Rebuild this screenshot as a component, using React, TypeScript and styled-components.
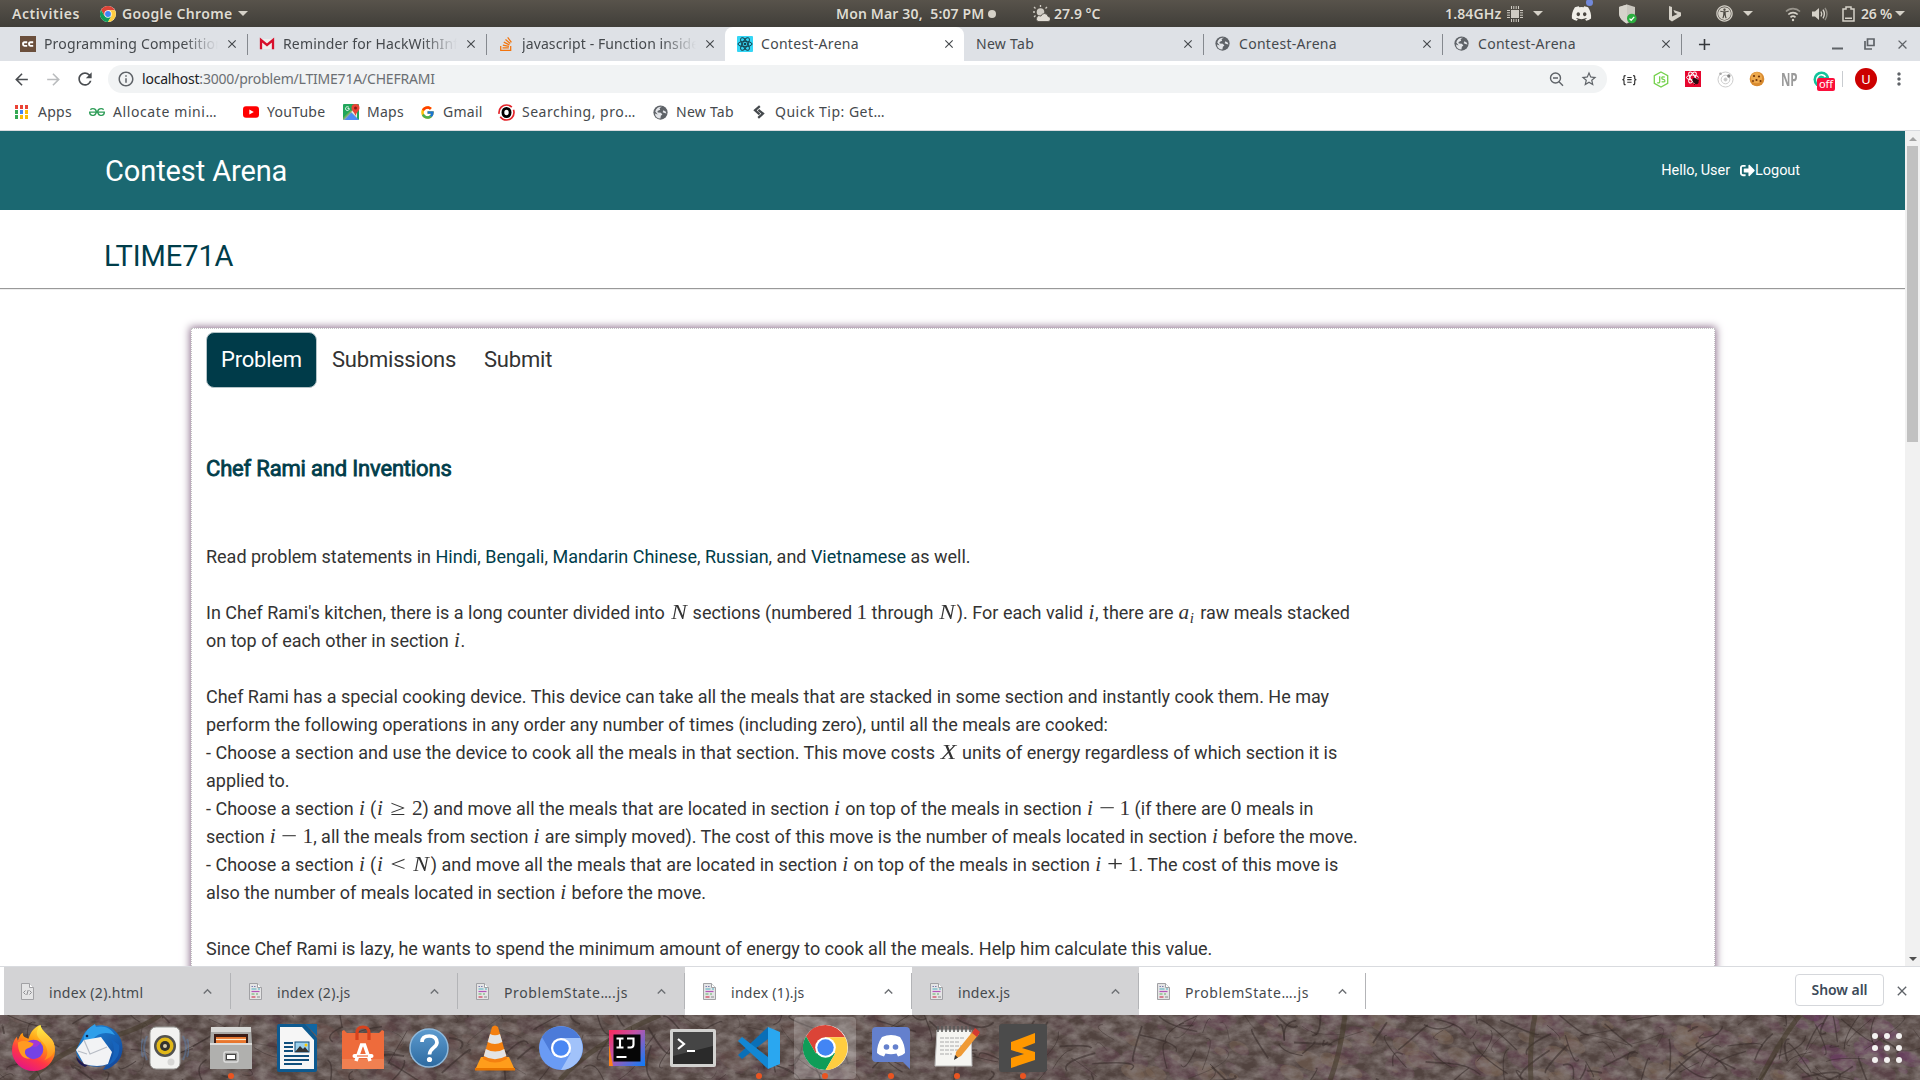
import React from "react";
import styled, { createGlobalStyle, css } from "styled-components";
import {
  MdArrowBack, MdArrowForward, MdRefresh, MdInfoOutline, MdStarBorder, MdMoreVert, MdClose,
  MdKeyboardArrowUp, MdAdd,
} from "react-icons/md";
import { FaDiscord, FaStackOverflow, FaSignOutAlt, FaUniversalAccess } from "react-icons/fa";
import { FcGoogle } from "react-icons/fc";
import { SiGeeksforgeeks } from "react-icons/si";

const Global = createGlobalStyle`
  * { box-sizing: border-box; }
  html, body { margin: 0; padding: 0; background: #fff; }
  body { width: 1920px; height: 1080px; overflow: hidden; }
  svg { display: block; flex: none; }
`;
const ui = css`font-family: "Noto Sans", "Open Sans", sans-serif; white-space: nowrap;`;
const web = css`font-family: Roboto, "Liberation Sans", sans-serif; white-space: nowrap;`;

const Screen = styled.div`
  width: 1920px; height: 1080px; overflow: hidden; display: flex; flex-direction: column; background: #fff;
`;
const Gap = styled.i<{ $w: number }>`width: ${p => p.$w}px; flex: none;`;
const Slot = styled.span<{ $w: number }>`
  width: ${p => p.$w}px; flex: none; display: flex; align-items: center; justify-content: center; height: 100%;
`;

/* ---------- GNOME top bar ---------- */
const TopBar = styled.div`
  ${ui} height: 27px; flex: none; display: flex; align-items: center;
  background: linear-gradient(#58534b, #403e39); color: #dfdbd2; font-size: 14px; font-weight: 600;
  text-shadow: 0 1px 1px #2225;
`;
const BarText = styled.span<{ $w: number; $ls?: number }>`
  width: ${p => p.$w}px; flex: none; letter-spacing: ${p => p.$ls ?? 0}px; line-height: 27px; white-space: pre;
`;
const Triangle = styled.i`
  width: 0; height: 0; flex: none; border: 5px solid transparent; border-top: 5px solid #d5d1c8; border-bottom: 0;
`;
const StatusDot = styled.i`width: 8px; height: 8px; border-radius: 50%; background: #d5d1c8; flex: none;`;
const Tray = styled.span`
  position: relative;
  &::after { content: ""; position: absolute; right: -1px; top: -4px; width: 7px; height: 7px; border-radius: 50%; background: #7289da; }
`;

/* ---------- Chrome frame ---------- */
const TabStrip = styled.div`
  ${ui} height: 34px; flex: none; display: flex; background: #dee1e6; padding-left: 8px; color: #45494d; font-size: 14px;
`;
const TabBox = styled.div<{ $active?: boolean; $line?: boolean }>`
  width: 239px; height: 34px; flex: none; display: flex; align-items: center; padding: 0 8px 0 12px;
  position: relative;
  ${p => p.$active && css`background: #fff; border-radius: 8px 8px 0 0;`}
  ${p => p.$line && css`&::after { content: ""; position: absolute; right: -1px; top: 7px; width: 1px; height: 21px; background: #85898f; }`}
`;
const TabTitle = styled.span<{ $fade?: boolean; $ls?: number }>`
  flex: 1; overflow: hidden; line-height: 34px; letter-spacing: ${p => p.$ls ?? 0.3}px;
  ${p => p.$fade && css`margin-right: 7px; mask-image: linear-gradient(90deg, #000 80%, transparent 100%);`}
`;
const TabIcon = styled.span`width: 16px; height: 16px; margin-right: 8px; flex: none; display: flex;`;

const Toolbar = styled.div`
  ${ui} height: 33px; flex: none; display: flex; align-items: center; padding: 4px 7px 1px 5px;
  color: #5f6368; background: #fff;
`;
const Omnibox = styled.div`
  width: 1499px; height: 28px; border-radius: 14px; background: #f1f3f4; display: flex; align-items: center;
  padding: 0 1px 0 9px; margin-left: 7px; flex: none;
`;
const Url = styled.span`
  flex: 1; margin-left: 7px; font-size: 14px; letter-spacing: -0.2px; color: #6b6f73; line-height: 28px;
  b { font-weight: 400; color: #202124; }
`;
const OffBadge = styled.span`
  position: absolute; left: 12px; top: 9px; width: 18px; height: 13px; border-radius: 2px; background: #fb0f3b;
  color: #fff; font-size: 11px; line-height: 12px; text-align: center;
`;
const Ext = styled.span`
  position: relative; width: 32px; height: 20px; flex: none; display: flex; align-items: center; justify-content: center;
`;
const NP = styled.span`font: 700 17px "Open Sans", sans-serif; color: #9a9a9a; transform: scaleX(.68); letter-spacing: 0;`;
const Braces = styled.span`font: 700 10px "DejaVu Sans", sans-serif; color: #333; transform: scaleX(.7);`;
const Divider = styled.i`width: 1px; height: 16px; background: #c9ccd0; flex: none;`;
const Avatar = styled.span`
  width: 22px; height: 22px; border-radius: 50%; background: #c00; color: #fff; font-size: 13px; line-height: 22px;
  text-align: center; margin: 0 12px; flex: none;
`;
const Bookmarks = styled.div`
  ${ui} height: 37px; flex: none; display: flex; align-items: center; font-size: 14px; color: #45494d; background: #fff;
  border-bottom: 1px solid #d9dbdf; padding-left: 13px;
`;
const BmText = styled.span<{ $w: number; $ls?: number }>`
  width: ${p => p.$w}px; flex: none; letter-spacing: ${p => p.$ls ?? 0.25}px; line-height: 36px;
`;
const AppGrid = styled.span`
  width: 17px; display: grid; grid-template-columns: repeat(3, 3.6px); gap: 1.4px; flex: none; justify-content: center;
`;
const AppDot = styled.i<{ $c: string }>`height: 3.6px; background: ${p => p.$c};`;

/* ---------- web page ---------- */
const Viewport = styled.div`height: 835px; flex: none; display: flex; overflow: hidden;`;
const Page = styled.div`width: 1905px; flex: none; ${web} color: #333; overflow: hidden;`;
const Header = styled.header`
  height: 79px; background: #1b6871; color: #fff; display: flex; align-items: center; justify-content: space-between;
  padding: 0 105px 0 105px;
`;
const Brand = styled.span`font-size: 29px; line-height: 79px; letter-spacing: -.1px; padding-top: 2px;`;
const UserNav = styled.nav`display: flex; align-items: center; font-size: 14.5px; line-height: 79px; letter-spacing: -.05px;`;
const Contest = styled.h2`
  margin: 0; height: 78px; padding: 22px 0 0 104px; font-size: 29px; font-weight: 400; line-height: 48px;
  letter-spacing: -.1px; color: #003d4a;
`;
const Rule = styled.hr`margin: 0 0 38px; height: 2px; border: 0; border-top: 1px solid #999; border-bottom: 1px solid #eee;`;
const Card = styled.section`
  margin-left: 191px; width: 1524px; height: 900px; border: 1px dotted #c4c4c4; padding: 3px 14px;
  box-shadow: 0 0 8px 1px #886b88;
`;
const PillRow = styled.div`display: flex; height: 56px;`;
const Pill = styled.span<{ $on?: boolean; $w: number }>`
  width: ${p => p.$w}px; height: 56px; padding-left: 15px; font-size: 22px; line-height: 56px; border-radius: 8px;
  letter-spacing: -.2px;
  ${p => p.$on && css`background: #003b49; color: #fff; border: 1px solid #b5c4c8; padding-left: 14px; line-height: 54px;`}
`;
const Title = styled.h3`
  margin: 65px 0 0; height: 32px; font-size: 22px; line-height: 32px; color: #003d4a; font-weight: 400;
  letter-spacing: -.18px; -webkit-text-stroke: .8px #003d4a;
`;
const Statement = styled.div`margin-top: 58px; font-size: 18px; line-height: 28px; color: #333; letter-spacing: -.008px;`;
const Line = styled.div<{ $gap?: boolean }>`height: 28px; margin-top: ${p => (p.$gap ? 28 : 0)}px; white-space: pre;`;
const Lang = styled.a`color: #003d4a;`;
const Glyph = styled.span<{ $w: number; $it?: boolean; $l?: number; $r?: number }>`
  display: inline-block; width: ${p => p.$w}em; margin-left: ${p => p.$l ?? 0}em; margin-right: ${p => p.$r ?? 0}em;
  font-family: "Liberation Serif", serif; font-size: 21.3px; line-height: 20px; text-align: center;
  font-style: ${p => (p.$it ? "italic" : "normal")};
`;
const Stretch = styled.span<{ $x: number }>`display: inline-block; transform: scaleX(${p => p.$x});`;
const SubGlyph = styled.sub`font: italic 15px/10px "Liberation Serif", serif; vertical-align: -4px; margin-right: 2px;`;

const Scroll = styled.div`
  width: 15px; flex: none; background: #f1f1f1; display: flex; flex-direction: column; align-items: center;
  justify-content: space-between;
`;
const Thumb = styled.i`width: 11px; height: 296px; background: #c1c1c1; margin-bottom: auto;`;
const Arrow = styled.i<{ $up?: boolean }>`
  width: 0; height: 0; border: 4px solid transparent; margin: 6px 0 5px;
  ${p => (p.$up ? css`border-bottom-color: #a3a3a3; border-top: 0;` : css`border-top-color: #505050; border-bottom: 0;`)}
`;

/* ---------- downloads shelf ---------- */
const Shelf = styled.div`
  ${ui} height: 49px; flex: none; display: flex; align-items: center; border-top: 1px solid #d9dbdf; padding-left: 4px;
  background: #fff; color: #45494d; font-size: 14px;
`;
const DItem = styled.div<{ $dim?: boolean; $first?: boolean }>`
  width: 227px; height: 48px; flex: none; display: flex; align-items: center; position: relative;
  padding: 0 15px 0 ${p => (p.$first ? 17 : 18)}px; background: ${p => (p.$dim ? "#d3d3d5" : "#fff")};
  &::after { content: ""; position: absolute; right: 0; top: 6px; width: 1px; height: 36px; background: #b3b4b7; }
`;
const DName = styled.span<{ $ls?: number }>`flex: 1; margin-left: 15px; line-height: 28px; letter-spacing: ${p => p.$ls ?? 0.3}px; padding-top: 4px;`;
const ShowAll = styled.span`
  width: 89px; height: 32px; border: 1px solid #d5d7db; border-radius: 4px; text-align: center; line-height: 29px;
  font-weight: 600; font-size: 14px; color: #3c4a59; margin: 0 0 3px auto; letter-spacing: -.05px;
`;

/* ---------- dock ---------- */
const DockBar = styled.div`height: 65px; flex: none; position: relative; background: #4b403d; overflow: hidden;`;
const Wallpaper = styled.svg`position: absolute; inset: 0;`;
const DockRow = styled.div`position: relative; display: flex; height: 65px; width: 1920px;`;
const DockSlot = styled.div<{ $on?: boolean; $run?: boolean }>`
  width: 66px; height: 65px; flex: none; display: flex; align-items: center; justify-content: center; position: relative;
  ${p => p.$on && css`&::before { content: ""; position: absolute; left: 2px; top: 2px; width: 62px; height: 62px; border-radius: 4px; background: #ffffff38; }`}
  ${p => p.$run && css`&::after { content: ""; position: absolute; left: 30px; top: 58px; width: 6px; height: 6px; border-radius: 50%; background: #ea5420; }`}
  svg { position: relative; }
`;
const GridBtn = styled.div`
  margin-left: auto; margin-right: 18px; align-self: center; display: grid; grid-template-columns: repeat(3, 6px); gap: 6px; padding-top: 1px;
`;
const GridDot = styled.i`width: 6px; height: 6px; border-radius: 50%; background: #f4f2f1;`;

/* ---------- drawings ---------- */
const Chrome = ({ s }: { s: number }) => (
  <svg width={s} height={s} viewBox="0 0 48 48">
    <circle cx="24" cy="24" r="24" fill="#fff" />
    <path d="M24 0A24 24 0 0 0 3.2 12L13.6 30 24 13h20.8A24 24 0 0 0 24 0Z" fill="#db4437" />
    <path d="M3.2 12A24 24 0 0 0 24 48L34.4 30 13.6 30Z" fill="#0f9d58" />
    <path d="M44.8 13H24L34.4 30 24 48A24 24 0 0 0 44.8 13Z" fill="#ffcd40" />
    <circle cx="24" cy="24" r="11" fill="#fff" /><circle cx="24" cy="24" r="8.8" fill="#4285f4" />
  </svg>
);
const Chromium = () => (
  <svg width="44" height="44" viewBox="0 0 48 48">
    <circle cx="24" cy="24" r="24" fill="#6a9bf4" />
    <path d="M3.2 12A24 24 0 0 1 44.8 13H24L13.6 30Z" fill="#4c7bd9" />
    <path d="M44.8 13H24L34.4 30 24 48A24 24 0 0 0 44.8 13Z" fill="#a1c2fa" />
    <circle cx="24" cy="24" r="11" fill="#fff" /><circle cx="24" cy="24" r="8.5" fill="#4a87f3" />
  </svg>
);
const CodeChef = () => (
  <svg width="16" height="16" viewBox="0 0 16 16"><rect width="16" height="16" fill="#6b4f3c" />
    <path d="M7.2 6.3H4.6Q3 6.3 3 8t1.6 1.9h2.6M13.2 6.3h-2.6Q9 6.3 9 8t1.6 1.9h2.6" fill="none" stroke="#fff" strokeWidth="1.9" /></svg>
);
const GmailIcon = () => (
  <svg width="16" height="16" viewBox="0 0 16 16"><path d="M2 3h12v10H2z" fill="#eee" />
    <path d="M2 13.3V4l6 5 6-5v9.3" fill="none" stroke="#d7102c" strokeWidth="2.3" /></svg>
);
const ReactTile = () => (
  <svg width="16" height="16" viewBox="0 0 16 16"><rect width="16" height="16" rx="1" fill="#35d6f5" />
    <g fill="none" stroke="#16414d" strokeWidth="1"><ellipse cx="8" cy="8" rx="7" ry="2.7" /><ellipse cx="8" cy="8" rx="7" ry="2.7" transform="rotate(60 8 8)" /><ellipse cx="8" cy="8" rx="7" ry="2.7" transform="rotate(120 8 8)" /></g><circle cx="8" cy="8" r="1.3" fill="#16414d" /></svg>
);
const Globe = () => (
  <svg width="15" height="15" viewBox="0 0 16 16"><circle cx="8" cy="8" r="7.6" fill="#5f6368" />
    <path d="M9.5 1.8 7 3.2 7.6 5 4.8 6.5 5 8l3.4.3L10 10l-1.6 1.5-.5 3A6.5 6.5 0 0 1 2 9l3 1-2.6-3A6.5 6.5 0 0 1 9.500 1.8ZM11 5.500l2.500 1.500.8 2-2-.6-2-.6z" fill="#e3e5e9" /></svg>
);
const MapsIcon = () => (
  <svg width="17" height="16" viewBox="0 0 17 16"><rect width="16" height="16" rx="1" fill="#21a65b" />
    <path d="M8 8 16 16H0Z" fill="#4c8bf5" /><path d="M8 8 14 2v12Z" fill="#e8e8e8" /><path d="M0 14 8 6l1.500 1.500L2 16H0Z" fill="#fbd14b" opacity=".35" />
    <path d="M12.500 0a4 4 0 0 1 4 4c0 2.800-2.800 3.600-4 8-1.200-4.400-4-5.200-4-8a4 4 0 0 1 4-4Z" fill="#ea4335" /><circle cx="12.500" cy="4" r="1.500" fill="#8c1b12" />
    <path d="M6 3.600A1.900 1.900 0 1 0 6.300 4.600H4.500" fill="none" stroke="#fff" strokeWidth=".9" /></svg>
);
const YtIcon = () => (
  <svg width="16" height="16" viewBox="0 0 16 16"><rect x="0" y="2.200" width="16" height="11.600" rx="3" fill="#f00" /><path d="M6.300 5.500v5l4.500-2.500Z" fill="#fff" /></svg>
);
const OIcon = () => (
  <svg width="17" height="17" viewBox="0 0 17 17"><circle cx="8.500" cy="8.500" r="7.500" fill="none" stroke="#e3252b" strokeWidth="1.700" strokeDasharray="19 3" /><ellipse cx="8.500" cy="8.500" rx="3.600" ry="4.200" fill="none" stroke="#000" strokeWidth="2.800" /></svg>
);
const SitePoint = () => (
  <svg width="12" height="14" viewBox="0 0 12 14" fill="none" stroke="#45494d" strokeWidth="2.200"><path d="M6.800 1.200 2 5.300l4.600 4M5.400 4.800 10 8.600l-4.800 4.200" /></svg>
);
const Chip = () => (
  <svg width="16" height="16" viewBox="0 0 16 16"><rect x="4" y="4" width="8" height="8" fill="#cfcbc3" />
    <path d="M4.500 0v3M6.800 0v3M9.200 0v3M11.500 0v3M4.500 13v3M6.800 13v3M9.200 13v3M11.500 13v3M0 4.500h3M0 6.800h3M0 9.200h3M0 11.500h3M13 4.500h3M13 6.800h3M13 9.200h3M13 11.500h3" stroke="#cfcbc3" strokeWidth="1" /></svg>
);
const Weather = () => (
  <svg width="17" height="17" viewBox="0 0 17 17"><circle cx="7.500" cy="7" r="3.800" fill="#cfcbc3" /><path d="M7.500 0v2M1 2l1.500 1.500M0 7h2M14 2l-1.500 1.500M1 12l1.500-1.500" stroke="#cfcbc3" strokeWidth="1.300" />
    <path d="M5 16.500h10a2.500 2.500 0 0 0 0-5 3.600 3.600 0 0 0-7-.4A2.800 2.800 0 0 0 5 16.500Z" fill="#e0dcd4" stroke="#4c4943" strokeWidth=".8" /></svg>
);
const Shield = () => (
  <svg width="20" height="20" viewBox="0 0 20 20"><path d="M9 .5 17 3v6c0 5-4 8.500-8 10.500C5 17.500 1 14 1 9V3Z" fill="#c9c6be" /><path d="M9 .5V19.500C5 17.500 1 14 1 9V3Z" fill="#d6d3cb" />
    <circle cx="13.800" cy="14.500" r="4.800" fill="#2bae3f" /><path d="m11.500 14.600 1.700 1.700 3-3.400" fill="none" stroke="#fff" strokeWidth="1.300" /></svg>
);
const Bing = () => (
  <svg width="12" height="16" viewBox="0 0 12 16"><path d="M0 0 3 1v9.600L8.500 8 5.700 6.700 4.500 4 12 6.600V10L3 15.500 0 13.600Z" fill="#d5d1c8" /></svg>
);
const Wifi = () => (
  <svg width="16" height="16" viewBox="0 0 16 16" fill="none" stroke="#d5d1c8" strokeWidth="1.700"><path d="M1 5.500a10 10 0 0 1 14 0" opacity=".55" /><path d="M3.300 8.500a6.800 6.800 0 0 1 9.400 0M5.500 11.300a3.700 3.700 0 0 1 5 0" /><circle cx="8" cy="14" r="1.200" fill="#d5d1c8" stroke="none" /></svg>
);
const Volume = () => (
  <svg width="16" height="14" viewBox="0 0 16 14" fill="none" stroke="#d5d1c8" strokeWidth="1.400"><path d="M0 4.500h3L7 1v12L3 9.500H0Z" fill="#d5d1c8" stroke="none" /><path d="M9 4.500q1.500 2.500 0 5M11 2.700q2.700 4.300 0 8.600" /><path d="M13 1q4 6 0 12" opacity=".5" /></svg>
);
const Battery = () => (
  <svg width="13" height="16" viewBox="0 0 13 16"><path d="M1 3h3V1h5v2h3v12H1Z" fill="none" stroke="#d5d1c8" strokeWidth="1.500" /><path d="M3 11.500h7V13H3Z" fill="#d5d1c8" /></svg>
);
const ZoomOut = () => (
  <svg width="15" height="15" viewBox="0 0 15 15" fill="none" stroke="#5f6368" strokeWidth="1.400"><circle cx="6.500" cy="6" r="5" /><path d="M4 6h5M10 9.700l4 4" /></svg>
);
const BugTile = () => (
  <svg width="16" height="16" viewBox="0 0 16 16"><rect width="16" height="16" fill="#e6062e" /><g fill="none" stroke="#fff" strokeWidth="1"><ellipse cx="7.500" cy="6.500" rx="6" ry="2.400" /><ellipse cx="7.500" cy="6.500" rx="6" ry="2.400" transform="rotate(60 7.500 6.500)" /><ellipse cx="7.500" cy="6.500" rx="6" ry="2.400" transform="rotate(120 7.500 6.500)" /></g><ellipse cx="10.500" cy="10" rx="3.600" ry="2.300" transform="rotate(45 10.500 10)" fill="#2b0b10" /><path d="m7.500 12 6-5M9 14l5-5" stroke="#2b0b10" strokeWidth=".8" /></svg>
);
const Orbit = () => (
  <svg width="17" height="17" viewBox="0 0 17 17" fill="none" stroke="#cdcdcd"><circle cx="8.500" cy="8.500" r="7.500" /><circle cx="8.500" cy="8.500" r="4.300" /><circle cx="8.500" cy="8.500" r="1.500" fill="#c6c6c6" /><circle cx="3.500" cy="2.800" r="1.300" fill="#aaa" stroke="none" /><circle cx="11.800" cy="5" r="1.700" fill="#808080" stroke="none" /></svg>
);
const Cookie = () => (
  <svg width="16" height="16" viewBox="0 0 16 16"><circle cx="8" cy="8" r="7.300" fill="#d98b2f" /><circle cx="7.500" cy="6.700" r="5.600" fill="#eda94d" /><g fill="#6e3208"><circle cx="5" cy="5" r="1.100" /><circle cx="10" cy="5.500" r="1.100" /><circle cx="7.500" cy="9" r="1.100" /><circle cx="11.500" cy="10" r="1" /><circle cx="4" cy="10" r=".9" /></g></svg>
);
const Node = () => (
  <svg width="16" height="17" viewBox="0 0 16 17" fill="none" stroke="#74d14c" strokeWidth="1.300"><path d="m8 1 6.700 3.700v7.600L8 16l-6.700-3.700V4.700Z" /><path d="M6.700 5.300v5.500q0 1.500-2.400.9M11.800 6.200q-3-.9-3 .8 0 1.200 1.600 1.400 1.600.2 1.500 1.500-.1 1.700-3.300.7" /></svg>
);
const Grammarly = () => (
  <svg width="17" height="17" viewBox="0 0 17 17"><circle cx="8.500" cy="8.500" r="8" fill="#11c39a" /><path d="M12.500 6A4.700 4.700 0 1 0 13 10H9.500" fill="none" stroke="#fff" strokeWidth="1.600" /></svg>
);
const FileIcon = ({ html }: { html?: boolean }) => (
  <svg width="13" height="17" viewBox="0 0 13 17"><path d="M.5.500h8l4 4v12H.5Z" fill="#e4e4e5" stroke="#a1a1a4" /><path d="M8.500.500v4h4" fill="#fff" stroke="#a1a1a4" />
    {html ? <path d="M4.500 7.500 2.500 9.500l2 2M8.500 7.500l2 2-2 2M7.200 7 5.800 12" fill="none" stroke="#8c8c90" /> : (
      <g strokeWidth="1.200"><path d="M2.500 3.500h4" stroke="#7b7bb0" strokeDasharray="1.500 1" /><path d="M2.500 6h5M9 6h2" stroke="#4faec0" /><path d="M2.500 8.500h8" stroke="#b455b8" /><path d="M2.500 11h3M7 11h2" stroke="#62b068" /><path d="M2.500 14h4" stroke="#d13c55" /><path d="M8 14h3" stroke="#999" /></g>)}
  </svg>
);
const Restore = () => (
  <svg width="11" height="12" viewBox="0 0 11 12" fill="none" stroke="#5f6368" strokeWidth="1.700"><path d="M3.500 1h6.500v6.500H3.500zM1 3v8h7" /></svg>
);

const Firefox = () => (
  <svg width="45" height="47" viewBox="0 0 46 48">
    <defs>
      <linearGradient id="ff" x1=".8" y1="0" x2=".3" y2="1"><stop offset="0" stopColor="#fff44f" /><stop offset=".4" stopColor="#ff980e" /><stop offset=".7" stopColor="#ff3647" /><stop offset="1" stopColor="#e31587" /></linearGradient>
      <linearGradient id="ff2" x2="0" y2="1"><stop stopColor="#fff04a" /><stop offset="1" stopColor="#ff8a16" /></linearGradient>
    </defs>
    <path d="M30 1c1 5 5 7 9 12 4 4 6 9 6 14a22 21 0 0 1-44 0c0-6 2-11 5-14l1 4c2-5 3-7 5-8 0 4 2 5 6 6 2-7 6-12 12-14Z" fill="url(#ff)" />
    <path d="M30 1c-6 8-4 12 2 17 6 6 7 13 2 19 9-3 12-10 10-17-2-8-12-9-14-19Z" fill="url(#ff2)" />
    <circle cx="23" cy="26" r="10" fill="#7542e5" /><path d="M18 19q6-5 12 0-3 6-8 4Z" fill="#a238d8" />
    <path d="M7 19c6-3 11-1 16 1-1 4-5 4-8 6-2 3 0 8 5 9-7 2-13-4-13-16Z" fill="#ff9a22" />
  </svg>
);
const Thunderbird = () => (
  <svg width="50" height="48" viewBox="0 0 50 48">
    <defs><linearGradient id="tb" x2="1" y2="1"><stop stopColor="#1f8fe0" /><stop offset="1" stopColor="#123f93" /></linearGradient></defs>
    <path d="M10 10C16-1 34-2 43 9c9 11 6 25-2 31-4 4-8 5-12 6l3-5C20 46 3 40 2 26Z" fill="url(#tb)" />
    <path d="M12 8c2-4 6-6 9-8l1 3c8-2 15 1 19 8-9-4-17-2-22 4l-9 2q-1-5 2-9Z" fill="#2f9fea" />
    <path d="M2 32q4 7 12 9l-3 2Q3 40 2 32Z" fill="#1c1a52" />
    <path d="m2 26 8-10 17-3 11 15-4 12q-10 4-24 0Z" fill="#f2f3f5" /><path d="m10 16 6 14 17-7M4 27l9 3" fill="none" stroke="#b7bcc5" strokeWidth="1.200" />
    <path d="M36 14q9 14-3 28 14-7 12-21Z" fill="#1763bb" /><circle cx="13" cy="12" r="1.300" fill="#0b2250" />
  </svg>
);
const Rhythmbox = () => (
  <svg width="48" height="46" viewBox="0 0 48 46"><path d="M6 11q-6 12 0 24M42 11q6 12 0 24M2 14q-4 9 0 18M46 14q4 9 0 18" stroke="#5b7daa" strokeWidth="2" opacity=".5" fill="none" />
    <rect x="9" y="2" width="30" height="42" rx="6" fill="#f2f2f0" stroke="#9a9a97" /><circle cx="24" cy="21" r="11" fill="#525250" /><circle cx="24" cy="21" r="8.500" fill="#e1b818" /><circle cx="24" cy="21" r="5" fill="#33322e" /><circle cx="24" cy="21" r="2" fill="#d9ccaa" /><circle cx="30" cy="37" r="3.500" fill="#d7d7d5" /></svg>
);
const Files = () => (
  <svg width="44" height="46" viewBox="0 0 44 46"><path d="M2 2h40l1 16v26H1V18Z" fill="#a9a9a7" /><path d="M2 2h40v5H2z" fill="#d8d8d6" /><path d="M5 9h34v10H5z" fill="#3a1c16" /><path d="M7 12h30v7H7z" fill="#e8762d" /><path d="M7 14.500h30" stroke="#ffe9c9" strokeWidth="1.200" /><path d="M1 18h42v26H1z" fill="#b0b0ae" /><path d="M1 18h42v2H1z" fill="#dcdcda" /><rect x="15" y="27" width="14" height="10" rx="1.500" fill="#9a9a98" stroke="#dedede" strokeWidth="1.500" /><rect x="17.500" y="29.500" width="9" height="5" fill="#fff" stroke="#444" /></svg>
);
const Writer = () => (
  <svg width="40" height="48" viewBox="0 0 40 48"><path d="M2 0h26l12 14v32q0 2-2 2H2q-2 0-2-2V2Q0 0 2 0Z" fill="#0d5a90" /><path d="M28 0h12v12Z" fill="#0f66a3" /><path d="M3 3h22l12 13v29H3Z" fill="#f6f6f6" /><path d="M7 19h9M7 23h9M7 27h9M7 32h25M7 36h25M7 40h18" stroke="#0f4e7c" strokeWidth="2" /><rect x="18" y="18" width="14" height="10" fill="#9bd0ec" stroke="#0f4e7c" /><path d="m18 28 5-6 3 3 2-2 4 5Z" fill="#333" /><circle cx="29" cy="21" r="1.500" fill="#fc0" /></svg>
);
const Software = () => (
  <svg width="44" height="46" viewBox="0 0 44 46"><path d="M1 6l2-1 3 3h32l3-3 2 1v38H1z" fill="#ee6b3b" /><path d="M1 34h42v10H1z" fill="#f08051" /><path d="M16 15V8q0-6 6-6t6 6v7" stroke="#d6421d" strokeWidth="3.200" fill="none" /><path d="m15 36 5.500-16h3L29 36" fill="none" stroke="#fff" strokeWidth="3.500" /><path d="M13.500 31h17" stroke="#fff" strokeWidth="4" strokeLinecap="round" /><path d="M16 31h11" stroke="#ee6b3b" strokeWidth="1.200" /></svg>
);
const Help = () => (
  <svg width="40" height="40" viewBox="0 0 40 40"><defs><linearGradient id="hp" x2="0" y2="1"><stop stopColor="#5d9bcf" /><stop offset="1" stopColor="#2d6aa0" /></linearGradient></defs><circle cx="20" cy="20" r="19" fill="url(#hp)" stroke="#8fb8da" strokeWidth="1.500" /><path d="M13 14q0-6 7.300-6T28 14.500c0 5-7.500 5.500-7.500 12" fill="none" stroke="#fff" strokeWidth="3.700" /><circle cx="20.500" cy="31.500" r="2.600" fill="#fff" /></svg>
);
const Vlc = () => (
  <svg width="42" height="46" viewBox="0 0 42 46"><path d="M7 32h28l6 13H1Z" fill="#ff9d1b" /><path d="M1 43h40v2.500H1z" fill="#e57300" /><path d="M18 2q3-3 6 0l9 32q-12 7-24 0Z" fill="#f48010" /><path d="m16 9-2.300 8q7 4 14.600 0L26 9q-5 2.500-10 0ZM11.800 24l-2 7q11 6.500 22.500 0l-2-7q-9 5-18.500 0Z" fill="#e3e3e3" /></svg>
);
const Idea = () => (
  <svg width="36" height="36" viewBox="0 0 36 36"><defs><linearGradient id="ij" x2="1" y2="1"><stop stopColor="#fe2857" /><stop offset=".4" stopColor="#c054a8" /><stop offset="1" stopColor="#087cfa" /></linearGradient></defs><rect width="36" height="36" fill="url(#ij)" /><path d="M0 14 4 36H0Z" fill="#fc801d" /><rect x="4.500" y="4.500" width="27" height="27" fill="#060606" />
    <path d="M7.500 8.500h7M11 8.500v9M7.500 17.500h7M18 8.500h6.500v6q0 3-3 3h-3M7.500 27h10" stroke="#fff" strokeWidth="2.100" fill="none" /></svg>
);
const Terminal = () => (
  <svg width="46" height="38" viewBox="0 0 46 38"><rect width="46" height="38" rx="2" fill="#d2d2d0" /><rect x="3" y="3" width="40" height="32" fill="#2a2a2a" /><path d="M3 3h40v14L3 27Z" fill="#454545" /><path d="m8 10 6 5-6 5M17 22h8" stroke="#fff" strokeWidth="2.200" fill="none" /></svg>
);
const VsCode = () => (
  <svg width="42" height="42" viewBox="0 0 42 42"><path d="M30 0 42 5v32l-12 5Z" fill="#2aa7f0" /><path d="M30 0 0 28l4 4 26-20Z" fill="#0a6fb7" /><path d="M30 42 0 14l4-4 26 20Z" fill="#1287d3" /></svg>
);
const DiscordTile = () => (
  <svg width="38" height="42" viewBox="0 0 38 42"><path d="M4 0h30q4 0 4 4v38l-7-7H4q-4 0-4-4V4q0-4 4-4Z" fill="#6480cd" /><path d="M10 10q9-4 18 0 5 7 5 16-3 3-7 3.500l-1.500-3q-5.500 1.500-11 0l-1.500 3Q8 29 5 26q0-9 5-16Z" fill="#fff" /><circle cx="14.500" cy="20" r="2.800" fill="#6480cd" /><circle cx="23.500" cy="20" r="2.800" fill="#6480cd" /></svg>
);
const Notes = () => (
  <svg width="46" height="44" viewBox="0 0 46 44"><path d="M3 4h34l1 36H1Z" fill="#f5f5f2" stroke="#bbb" /><path d="M4 6V0M8 6V0M12 6V0M16 6V0M20 6V0M24 6V0M28 6V0M32 6V0M36 6V0" stroke="#555" strokeWidth="1.500" /><path d="M6 12h24M6 16h20M6 20h22M6 24h18M6 28h12" stroke="#aaa" strokeDasharray="4 1" /><path d="m40 4 5 4-18 22-6 3 1-7Z" fill="#ef9a36" /><path d="m38 7 3-5 5 4-3 5Z" fill="#d43a31" /><path d="m20 34 1-5 3 2.500Z" fill="#333" /></svg>
);
const Sublime = () => (
  <svg width="48" height="48" viewBox="0 0 48 48"><rect width="48" height="48" rx="3" fill="#4b4b4b" /><path d="m12 18 24-9v10l-13 5 13 4v8l-24 8V34l13-4-13-4Z" fill="#ff9800" /></svg>
);

/* Blossoming-tree desktop background; placed from a fixed seed so it is the same every time */
const rand = (() => { let s = 7; return () => (s = (s * 16807) % 2147483647) / 2147483647; })();
const petals = Array.from({ length: 420 }, () => {
  const x = rand() * 1920, pick = rand();
  const c = x > 1790 && pick < 0.7 ? "#6e3d66" : x > 1100 && pick < 0.35 ? "#7a6354" : x > 1100 ? "#61414f" : pick < 0.3 ? "#67504c" : "#573f45";
  return { x, y: rand() * 65, r: 3 + rand() * 13, c };
});
const twigs = Array.from({ length: 260 }, () => {
  const x = rand() * 1920, y = rand() * 65;
  return { d: `M${x} ${y}q${rand() * 30 - 15} ${rand() * 24 - 12} ${rand() * 80 - 40} ${rand() * 70 - 35}`, w: 0.5 + rand() * 1.4 };
});
const Backdrop = () => (
  <Wallpaper width="1920" height="65">
    <defs><filter id="grain" x="0" y="0" width="100%" height="100%"><feTurbulence type="fractalNoise" baseFrequency=".07 .11" numOctaves="4" seed="4" /><feColorMatrix values="0 0 0 0 .23  0 0 0 0 .19  0 0 0 0 .18  0 1.800 0 0 -.5" /></filter></defs>
    <rect width="1920" height="65" fill="#51433f" />
    {petals.map((p, i) => <ellipse key={i} cx={p.x} cy={p.y} rx={p.r} ry={p.r * 0.55} fill={p.c} opacity=".5" transform={`rotate(25 ${p.x} ${p.y})`} />)}
    <rect width="1920" height="65" filter="url(#grain)" />
    {twigs.map((t, i) => <path key={i} d={t.d} stroke="#352a28" strokeWidth={t.w} opacity=".55" fill="none" />)}
    <path d="M30 65Q60 35 100 25T160 0M560 65Q590 30 660 0M1345 0q-5 40-15 65M1535 0q-6 30-4 65M1760 65q20-40 40-65" stroke="#453b2c" strokeWidth="5" fill="none" opacity=".6" />
  </Wallpaper>
);

const N = () => <Glyph $it $w={0.888}><Stretch $x={1.1}>N</Stretch></Glyph>;
const X = () => <Glyph $it $w={0.852}><Stretch $x={1.2}>X</Stretch></Glyph>;
const I = () => <Glyph $it $w={0.345}>i</Glyph>;
const D = ({ n }: { n: string }) => <Glyph $w={0.5}>{n}</Glyph>;
const Rel = ({ s }: { s: string }) => <Glyph $w={0.778} $l={0.278} $r={0.278}><Stretch $x={1.3}>{s}</Stretch></Glyph>;
const Op = ({ s }: { s: string }) => <Glyph $w={0.778} $l={0.222} $r={0.222}><Stretch $x={1.35}>{s}</Stretch></Glyph>;

const tabs = [
  { t: "Programming Competitions", icon: <CodeChef />, fade: true, line: true, ls: 0.15 },
  { t: "Reminder for HackWithInfy", icon: <GmailIcon />, fade: true, line: true, ls: 0.15 },
  { t: "javascript - Function inside", icon: <FaStackOverflow size={16} color="#f2740d" />, fade: true, ls: 0.1 },
  { t: "Contest-Arena", icon: <ReactTile />, active: true },
  { t: "New Tab", line: true },
  { t: "Contest-Arena", icon: <Globe />, line: true },
  { t: "Contest-Arena", icon: <Globe />, line: true },
];
const bookmarks = [
  { w: 18, icon: <SiGeeksforgeeks size={16} color="#2f9d58" />, t: "Allocate mini…", tw: 129, ls: 0.6 },
  { w: 18, icon: <YtIcon />, t: "YouTube", tw: 75 },
  { w: 18, icon: <MapsIcon />, t: "Maps", tw: 51 },
  { w: 18, icon: <FcGoogle size={15} />, t: "Gmail", tw: 54 },
  { w: 18, icon: <OIcon />, t: "Searching, pro…", tw: 129, ls: 0.5 },
  { w: 18, icon: <Globe />, t: "New Tab", tw: 74 },
  { w: 18, icon: <SitePoint />, t: "Quick Tip: Get…", tw: 120, ls: 0.5 },
];
const appColors = ["#ea4335", "#ea4335", "#ea4335", "#34a853", "#4285f4", "#fbbc05", "#34a853", "#fbbc05", "#fbbc05"];
const downloads = [
  { t: "index (2).html", dim: true, html: true }, { t: "index (2).js", dim: true }, { t: "ProblemState….js", dim: true, ls: 0.6 },
  { t: "index (1).js" }, { t: "index.js", dim: true }, { t: "ProblemState….js", ls: 0.6 },
];
const dock = [
  { i: <Firefox /> }, { i: <Thunderbird /> }, { i: <Rhythmbox /> }, { i: <Files />, run: true }, { i: <Writer /> }, { i: <Software /> },
  { i: <Help /> }, { i: <Vlc /> }, { i: <Chromium /> }, { i: <Idea /> }, { i: <Terminal /> }, { i: <VsCode />, run: true },
  { i: <Chrome s={45} />, run: true, on: true }, { i: <DiscordTile />, run: true }, { i: <Notes />, run: true }, { i: <Sublime />, run: true },
];

export default function App() {
  return (
    <Screen>
      <Global />
      <TopBar>
        <Gap $w={12} /><BarText $w={88} $ls={0.55}>Activities</BarText><Chrome s={16} /><Gap $w={6} />
        <BarText $w={116} $ls={0.35}>Google Chrome</BarText><Triangle />
        <Gap $w={588} /><BarText $w={152} $ls={0.15}>Mon Mar 30,  5:07 PM</BarText><StatusDot />
        <Gap $w={37} /><Weather /><Gap $w={4} /><BarText $w={391}>27.9 °C</BarText>
        <BarText $w={62} $ls={0.15}>1.84GHz</BarText><Chip /><Gap $w={10} /><Triangle />
        <Gap $w={28} /><Tray><FaDiscord size={21} color="#f0eee8" /></Tray><Gap $w={26} /><Shield /><Gap $w={31} /><Bing />
        <Gap $w={35} /><FaUniversalAccess size={17} color="#d5d1c8" /><Gap $w={10} /><Triangle />
        <Gap $w={32} /><Wifi /><Gap $w={11} /><Volume /><Gap $w={14} /><Battery /><Gap $w={6} />
        <BarText $w={34} $ls={-0.2}>26 %</BarText><Triangle />
      </TopBar>

      <TabStrip>
        {tabs.map((t, i) => (
          <TabBox key={i} $active={t.active} $line={t.line}>
            {t.icon && <TabIcon>{t.icon}</TabIcon>}
            <TabTitle $fade={t.fade} $ls={t.ls}>{t.t}</TabTitle>
            <MdClose size={14} color="#45494d" />
          </TabBox>
        ))}
        <Slot $w={46}><MdAdd size={19} color="#36393d" /></Slot>
        <Gap $w={94} /><Slot $w={32}><svg width="11" height="12"><path d="M0 10.500h11" stroke="#5f6368" strokeWidth="2" /></svg></Slot>
        <Slot $w={32}><Restore /></Slot><Slot $w={34}><MdClose size={15} color="#5f6368" /></Slot>
      </TabStrip>

      <Toolbar>
        <Slot $w={32}><MdArrowBack size={19} color="#4a4d51" /></Slot>
        <Slot $w={32}><MdArrowForward size={19} color="#babcbe" /></Slot>
        <Slot $w={32}><MdRefresh size={20} color="#4a4d51" /></Slot>
        <Omnibox>
          <MdInfoOutline size={18} />
          <Url><b>localhost</b>:3000/problem/LTIME71A/CHEFRAMI</Url>
          <Slot $w={32}><ZoomOut /></Slot><Slot $w={34}><MdStarBorder size={18} /></Slot>
        </Omnibox>
        <Gap $w={6} />
        <Ext><Braces>{"{≡}"}</Braces></Ext><Ext><Node /></Ext><Ext><BugTile /></Ext><Ext><Orbit /></Ext><Ext><Cookie /></Ext>
        <Ext><NP>NP</NP></Ext><Ext><Grammarly /><OffBadge>off</OffBadge></Ext>
        <Gap $w={5} /><Divider /><Avatar>U</Avatar><Slot $w={20}><MdMoreVert size={20} /></Slot>
      </Toolbar>

      <Bookmarks>
        <AppGrid>{appColors.map((c, i) => <AppDot key={i} $c={c} />)}</AppGrid>
        <Gap $w={8} /><BmText $w={50}>Apps</BmText>
        {bookmarks.map((b, i) => (
          <React.Fragment key={i}><Slot $w={b.w}>{b.icon}</Slot><Gap $w={7} /><BmText $w={b.tw} $ls={b.ls}>{b.t}</BmText></React.Fragment>
        ))}
      </Bookmarks>

      <Viewport>
        <Page>
          <Header>
            <Brand>Contest Arena</Brand>
            <UserNav>Hello, User<Gap $w={10} /><FaSignOutAlt size={15} />Logout</UserNav>
          </Header>
          <Contest>LTIME71A</Contest>
          <Rule />
          <Card>
            <PillRow><Pill $on $w={111}>Problem</Pill><Pill $w={152}>Submissions</Pill><Pill $w={100}>Submit</Pill></PillRow>
            <Title>Chef Rami and Inventions</Title>
            <Statement>
              <Line>Read problem statements in <Lang>Hindi</Lang>, <Lang>Bengali</Lang>, <Lang>Mandarin Chinese</Lang>, <Lang>Russian</Lang>, and <Lang>Vietnamese</Lang> as well.</Line>
              <Line $gap>In Chef Rami's kitchen, there is a long counter divided into <N /> sections (numbered <D n="1" /> through <N />). For each valid <I />, there are <Glyph $it $w={0.55}>a</Glyph><SubGlyph>i</SubGlyph> raw meals stacked</Line>
              <Line>on top of each other in section <I />.</Line>
              <Line $gap>Chef Rami has a special cooking device. This device can take all the meals that are stacked in some section and instantly cook them. He may</Line>
              <Line>perform the following operations in any order any number of times (including zero), until all the meals are cooked:</Line>
              <Line>- Choose a section and use the device to cook all the meals in that section. This move costs <X /> units of energy regardless of which section it is</Line>
              <Line>applied to.</Line>
              <Line>- Choose a section <I /> (<I /><Rel s="≥" /><D n="2" />) and move all the meals that are located in section <I /> on top of the meals in section <I /><Op s="−" /><D n="1" /> (if there are <D n="0" /> meals in</Line>
              <Line>section <I /><Op s="−" /><D n="1" />, all the meals from section <I /> are simply moved). The cost of this move is the number of meals located in section <I /> before the move.</Line>
              <Line>- Choose a section <I /> (<I /><Rel s="<" /><N />) and move all the meals that are located in section <I /> on top of the meals in section <I /><Op s="+" /><D n="1" />. The cost of this move is</Line>
              <Line>also the number of meals located in section <I /> before the move.</Line>
              <Line $gap>Since Chef Rami is lazy, he wants to spend the minimum amount of energy to cook all the meals. Help him calculate this value.</Line>
            </Statement>
          </Card>
        </Page>
        <Scroll><Arrow $up /><Thumb /><Arrow /></Scroll>
      </Viewport>

      <Shelf>
        {downloads.map((d, i) => (
          <DItem key={i} $dim={d.dim} $first={i === 0}><FileIcon html={d.html} /><DName $ls={d.ls}>{d.t}</DName><MdKeyboardArrowUp size={17} color="#6d7074" /></DItem>
        ))}
        <ShowAll>Show all</ShowAll><Slot $w={36}><MdClose size={16} color="#5f6368" /></Slot>
      </Shelf>

      <DockBar>
        <Backdrop />
        <DockRow>
          {dock.map((d, i) => <DockSlot key={i} $on={d.on} $run={d.run}>{d.i}</DockSlot>)}
          <GridBtn>{Array.from({ length: 9 }, (_, i) => <GridDot key={i} />)}</GridBtn>
        </DockRow>
      </DockBar>
    </Screen>
  );
}
